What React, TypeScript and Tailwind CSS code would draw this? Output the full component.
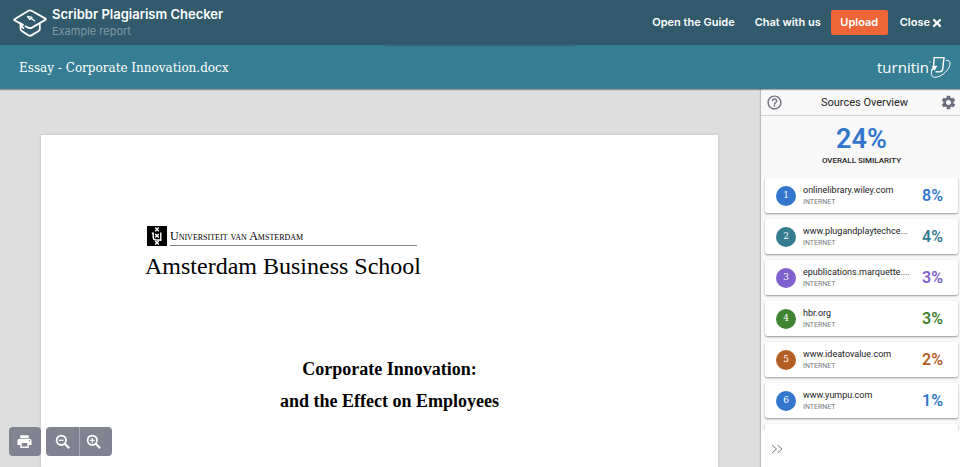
import React, { useState } from 'react';
import { MdHelpOutline, MdSettings, MdPrint } from 'react-icons/md';
import { FaTimes } from 'react-icons/fa';

const sources = [
  { id: 1, name: 'onlinelibrary.wiley.com', percent: 8, bg: 'bg-[#3276cd]', text: 'text-[#3276cd]' },
  { id: 2, name: 'www.plugandplaytechce...', percent: 4, bg: 'bg-[#357c90]', text: 'text-[#357c90]' },
  { id: 3, name: 'epublications.marquette....', percent: 3, bg: 'bg-[#8060cc]', text: 'text-[#8060cc]' },
  { id: 4, name: 'hbr.org', percent: 3, bg: 'bg-[#3f8430]', text: 'text-[#3f8430]' },
  { id: 5, name: 'www.ideatovalue.com', percent: 2, bg: 'bg-[#b45d24]', text: 'text-[#b45d24]' },
  { id: 6, name: 'www.yumpu.com', percent: 1, bg: 'bg-[#3276cd]', text: 'text-[#3276cd]' },
];

function ScribbrLogo() {
  return (
    <svg
      viewBox="0 0 34 28"
      className="w-[34px] h-7 shrink-0"
      fill="none"
      stroke="white"
      strokeWidth="1.8"
      strokeLinecap="round"
      strokeLinejoin="round"
    >
      <path d="M10 15.9 1.5 11.3Q.8 10.8 1.5 10.3L15.5 1.8Q17 1 18.5 1.8L32.5 9.6Q33.2 10.2 32.5 10.8L19 18.6Q17 19.6 15.2 18.6L12.5 17.2" />
      <path d="M7.5 14.5V20Q7.5 21.3 8.8 22L15.3 26.2Q17 27.1 18.8 26.1L25.3 22.3Q26.8 21.4 26.8 20V15.5" />
      <path d="M7.8 15.5Q8.2 17.8 10.4 19" />
      <path d="M14.5 7.4 19 8.4 16.8 10.6ZM18.5 9.5 21.5 11.8" strokeWidth="1.3" />
    </svg>
  );
}

function TurnitinLogo() {
  return (
    <div className="flex items-center text-white">
      <span className="font-['Open_Sans',sans-serif] text-[15px] leading-5 font-medium">turnitin</span>
      <svg viewBox="0 0 22 24" className="w-[22px] h-6 shrink-0" fill="none" stroke="white">
        <path d="M4.6 11.3 5.2 2.6H15L13.7 14.2Q13.2 17 10.5 16.9L6.6 16.7" strokeWidth="1.4" />
        <path d="M3 10.7 8.3 10.8 5.5 15.8 4.3 14Q2.7 16.2 3 17.3L1.9 16Q2 14 3.7 12.7Z" fill="white" stroke="none" />
        <path d="M2.6 16.8C1.5 20.4 3.4 22.7 7 22.2C13.7 21.2 20.1 14.7 21 9.3C21.4 6.5 19.8 5.1 16.9 5.3" strokeWidth="1" />
        <circle cx=".9" cy="7" r=".6" strokeWidth=".4" />
      </svg>
    </div>
  );
}

function UvaMark() {
  return (
    <svg viewBox="0 0 20 20" className="w-5 h-5 shrink-0">
      <rect width="20" height="20" fill="black" />
      <g fill="none" stroke="white" strokeWidth="1.4">
        <path d="m8.2 1.6 3.6 3.6m0-3.6L8.2 5.2M8.2 8l3.6 3.6m0-3.6-3.6 3.6M8.2 15l3.6 3.6m0-3.6L8.2 18.6" />
        <path d="M4.8 7.2H7M6.2 7v4.5Q6.2 14 10 14h3.8M13.8 6.5V15" />
      </g>
    </svg>
  );
}

function Magnifier({ plus }: { plus?: boolean }) {
  return (
    <svg viewBox="0 0 16 16" className="w-4 h-4" fill="none" stroke="white">
      <circle cx="6.3" cy="6.3" r="4.7" strokeWidth="1.8" />
      <path d="m9.8 9.8 4.4 4.4" strokeWidth="2.2" />
      <path d={plus ? 'M3.9 6.3h4.8M6.3 3.9v4.8' : 'M3.9 6.3h4.8'} strokeWidth="1.3" />
    </svg>
  );
}

function App() {
  const [zoom, setZoom] = useState(1);

  return (
    <div className="h-screen flex flex-col overflow-hidden bg-[#dedede] font-['Roboto',sans-serif]">
      {/* Header */}
      <header className="h-[45px] shrink-0 flex items-center justify-between bg-[#325a6c] pl-[13px] pr-[18px] font-['Inter',sans-serif]">
        <div className="flex items-center gap-[5px]">
          <ScribbrLogo />
          <div className="pb-0.5">
            <h1 className="text-[13px] leading-[18px] font-semibold text-white">Scribbr Plagiarism Checker</h1>
            <p className="text-[11px] leading-4 text-[#7f98a3]">Example report</p>
          </div>
        </div>
        <nav className="flex items-center text-[11px] font-semibold text-white">
          <a href="#guide" className="mr-5">Open the Guide</a>
          <a href="#chat" className="mr-2.5">Chat with us</a>
          <button className="h-[25px] w-[57px] rounded-xs bg-[#ee6637]">Upload</button>
          <button className="ml-3 flex items-center gap-0.5">
            Close <FaTimes className="w-2.5 h-3" />
          </button>
        </nav>
      </header>

      {/* Document bar */}
      <div className="relative h-11 shrink-0 z-10 flex items-center justify-between bg-[#367e94] pl-[19px] pr-[9px] shadow-[0_1px_1px_rgba(0,0,0,0.35)]">
        <div className="absolute top-0 left-1/2 -translate-x-1/2 w-[190px] h-0.5 bg-black/10" />
        <h2 className="pt-0.5 font-['DejaVu_Serif',serif] text-xs text-white">Essay - Corporate Innovation.docx</h2>
        <TurnitinLogo />
      </div>

      <div className="flex flex-1 min-h-0">
        {/* Document */}
        <main className="relative flex-1 min-w-0 flex pt-[46px] pl-[41px] pr-[43px]">
          <article className="flex-1 bg-white text-black shadow-[0_0_3px_rgba(0,0,0,0.15)] font-['Liberation_Serif',serif]">
            <div style={{ zoom }}>
              <div className="ml-[104px] mt-[91px] w-[272px]">
                <div className="flex gap-[3px] pl-0.5">
                  <UvaMark />
                  <p className="flex-1 h-5 border-b border-[#888888] text-[12px] leading-5 [font-variant:small-caps] whitespace-nowrap">
                    Universiteit van Amsterdam
                  </p>
                </div>
                <p className="text-2xl leading-10 whitespace-nowrap">Amsterdam Business School</p>
              </div>
              <h3 className="mt-[67px] pl-5 text-center text-lg leading-8 font-bold">
                Corporate Innovation:
                <br />
                and the Effect on Employees
              </h3>
            </div>
          </article>

          <div className="absolute left-[9px] bottom-[11px] flex gap-[5px] text-white">
            <button aria-label="Print" className="w-8 h-[29px] flex items-center justify-center pr-0.5 rounded bg-[#828390]">
              <MdPrint className="w-[17px] h-[17px]" />
            </button>
            <div className="flex rounded bg-[#828390]">
              <button
                aria-label="Zoom out"
                onClick={() => setZoom(zoom - 0.1)}
                className="w-[34px] h-[29px] flex items-center justify-center border-r border-[#a9aab3]"
              >
                <Magnifier />
              </button>
              <button
                aria-label="Zoom in"
                onClick={() => setZoom(zoom + 0.1)}
                className="w-8 h-[29px] flex items-center justify-center pr-1"
              >
                <Magnifier plus />
              </button>
            </div>
          </div>
        </main>

        {/* Sources */}
        <aside className="w-[199px] shrink-0 flex flex-col bg-[#f8f8f8] shadow-[-1px_0_1px_rgba(0,0,0,0.15)]">
          <div className="h-[27px] shrink-0 flex items-center justify-between border-b border-[#d2d2d2] pl-[5px] pr-[3px] text-[#6c6e7d]">
            <button aria-label="Help"><MdHelpOutline className="w-[17px] h-[17px]" /></button>
            <h2 className="pl-1.5 pt-0.5 text-[11px] text-[#222222]">Sources Overview</h2>
            <button aria-label="Settings"><MdSettings className="w-[17px] h-[17px]" /></button>
          </div>
          <div className="pt-2 pb-[11px] pl-0.5 text-center">
            <p className="text-[27px] leading-[30px] font-semibold text-[#3276cd]">24%</p>
            <p className="text-[8px] leading-[13px] font-medium text-[#222222]">OVERALL SIMILARITY</p>
          </div>
          <ul className="flex-1 min-h-0 overflow-hidden flex flex-col gap-1.5 pl-1 pr-0.5">
            {sources.map((source) => (
              <li
                key={source.id}
                className="h-[35px] shrink-0 flex items-center rounded-xs bg-white pl-[11px] pr-[15px] shadow-[0_1px_2px_rgba(0,0,0,0.4)]"
              >
                <span className={`w-5 h-5 shrink-0 rounded-full flex items-center justify-center text-[9px] text-white font-['DejaVu_Serif',serif] ${source.bg}`}>
                  {source.id}
                </span>
                <div className="ml-[7px]">
                  <p className="whitespace-nowrap text-[9px] leading-3 text-[#222222]">{source.name}</p>
                  <p className="text-[7px] leading-3 text-[#777984]">INTERNET</p>
                </div>
                <span className={`ml-auto text-base font-semibold ${source.text}`}>{source.percent}%</span>
              </li>
            ))}
            <li className="h-[35px] shrink-0 rounded-xs bg-white shadow-[0_1px_2px_rgba(0,0,0,0.4)]" />
          </ul>
          <div className="h-[37px] shrink-0 z-10 flex items-center bg-[#fdfdfd] pl-2.5">
            <button aria-label="Collapse panel">
              <svg viewBox="0 0 12 10" className="w-3 h-2.5" fill="none" stroke="#777984">
                <path d="m1 1 4.5 4L1 9M6.5 1 11 5 6.5 9" />
              </svg>
            </button>
          </div>
        </aside>
      </div>
    </div>
  );
}

export default App;
